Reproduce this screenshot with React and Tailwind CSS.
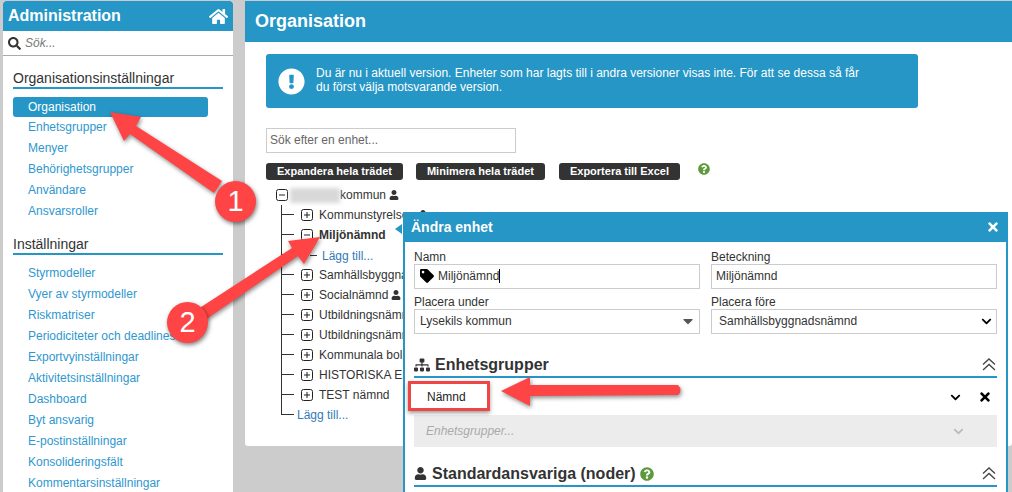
import React from 'react';
import {
  FaHome,
  FaSearch,
  FaUser,
  FaTag,
  FaSitemap,
  FaQuestionCircle,
  FaTimes,
  FaChevronDown,
  FaExclamationCircle,
  FaCaretDown,
} from 'react-icons/fa';

const menuA = ['Enhetsgrupper', 'Menyer', 'Behörighetsgrupper', 'Användare', 'Ansvarsroller'];
const menuB = [
  'Styrmodeller',
  'Vyer av styrmodeller',
  'Riskmatriser',
  'Periodiciteter och deadlines',
  'Exportvyinställningar',
  'Aktivitetsinställningar',
  'Dashboard',
  'Byt ansvarig',
  'E-postinställningar',
  'Konsolideringsfält',
  'Kommentarsinställningar',
];

const MenuLink = ({ label }) => (
  <div className="h-[21px] pl-[15px] text-[12px] leading-[21px] text-[#2f97cf] whitespace-nowrap">{label}</div>
);

const Heading = ({ label }) => (
  <div className="mx-[10px] border-b-2 border-[#2596c6] h-[19px] text-[14px] leading-[17px] text-[#333] whitespace-nowrap">
    {label}
  </div>
);

const Sidebar = () => (
  <div className="w-[230px] h-[491px] shrink-0 bg-white rounded-t-[3px] overflow-hidden">
    <div className="h-[30px] bg-[#2596c6] flex items-center justify-between pl-[5px] pr-[5px] rounded-t-[3px]">
      <span className="text-[16px] font-bold text-white">Administration</span>
      <FaHome className="text-white text-[19px]" />
    </div>
    <div className="h-[25px] flex items-center pl-[5px] border-b border-[#aaa]">
      <FaSearch className="text-[#333] text-[13px]" />
      <span className="ml-[4px] text-[12px] italic text-[#777]">Sök...</span>
    </div>
    <div className="pt-[14px]">
      <Heading label="Organisationsinställningar" />
      <div className="mt-[8px] mx-[10px] w-[195px] h-[20px] bg-[#2596c6] rounded-[3px] pl-[15px] text-[12px] leading-[20px] text-white">
        Organisation
      </div>
      <div className="ml-[10px]">
        {menuA.map((m) => (
          <MenuLink key={m} label={m} />
        ))}
      </div>
      <div className="mt-[14px]">
        <Heading label="Inställningar" />
      </div>
      <div className="mt-[8px] ml-[10px]">
        {menuB.map((m) => (
          <MenuLink key={m} label={m} />
        ))}
      </div>
    </div>
  </div>
);

const TreeBox = ({ open }) => (
  <svg width="12" height="12" viewBox="0 0 12 12" className="shrink-0">
    <rect x="0.5" y="0.5" width="11" height="11" rx="2" fill="white" stroke="#222" />
    <path d="M3 6H9" stroke="#222" />
    {!open && <path d="M6 3V9" stroke="#222" />}
  </svg>
);

const Stub = ({ last }) => (
  <div className={`w-[13px] h-5 shrink-0 ${last ? '' : 'border-l border-[#333]'}`}>
    <div className={`h-[10px] border-b border-[#333] ${last ? 'border-l' : ''}`} />
  </div>
);

// labels stop where the dialog starts, except the first row that peeks out above it
const TreeRow = ({ label, bold, open, user, clip }) => (
  <div className="flex items-center h-5">
    <Stub />
    <div className="ml-[7px]">
      <TreeBox open={open} />
    </div>
    <span className={`ml-[6px] text-[12px] whitespace-nowrap text-[#333] ${bold ? 'font-bold' : ''} ${clip ? 'max-w-[84px] overflow-hidden' : ''}`}>
      {label}
    </span>
    {user && <FaUser className="ml-[3px] text-[10px] text-[#333]" />}
  </div>
);

const Tree = () => (
  <div className="mt-[5px] ml-[10px] text-[12px]">
    <div className="flex items-center h-5">
      <TreeBox open />
      <div className="ml-[2px] w-[50px] h-[15px] bg-[#d8d8d8] blur-[2px]" />
      <span className="text-[#333]">kommun</span>
      <FaUser className="ml-[3px] text-[10px] text-[#333]" />
    </div>
    <div className="ml-[5px]">
      <TreeRow label="Kommunstyrelsen" user />
      <TreeRow label="Miljönämnd" bold open />
      <div className="flex items-center h-5">
        <Stub />
        <div className="ml-[16px] h-5 flex items-center">
          <div className="w-[7px] border-b border-[#333]" />
          <span className="ml-[5px] pt-[1px] text-[#337ab7]">Lägg till...</span>
        </div>
      </div>
      <TreeRow label="Samhällsbyggnadsnämnd" clip />
      <TreeRow label="Socialnämnd" user />
      <TreeRow label="Utbildningsnämnd" clip />
      <TreeRow label="Utbildningsnämnd" clip />
      <TreeRow label="Kommunala bolag" clip />
      <TreeRow label="HISTORISKA ENHETER" clip />
      <TreeRow label="TEST nämnd" />
      <div className="flex items-center h-5">
        <Stub last />
        <span className="ml-[3px] text-[#337ab7]">Lägg till...</span>
      </div>
    </div>
  </div>
);

const DarkButton = ({ label, className }) => (
  <div className={`h-[17px] w-fit bg-[#333] rounded-[3px] px-[11px] text-[11px] leading-[17px] font-bold text-white whitespace-nowrap ${className}`}>
    {label}
  </div>
);

const Main = () => (
  <div className="relative flex-1 h-[445px] bg-white rounded-b-[3px] overflow-hidden">
    <div className="h-[41px] bg-[#2596c6] pl-[10px] text-[18px] leading-[41px] font-bold text-white">Organisation</div>
    <div className="pl-[21px]">
      <div className="mt-[12px] w-[652px] h-[54px] bg-[#2596c6] rounded-[3px] flex items-center pl-[12px]">
        <FaExclamationCircle className="text-white text-[27px] shrink-0" />
        <p className="ml-[11px] mb-[3px] w-[550px] text-[12px] leading-[14px] text-white">
          Du är nu i aktuell version. Enheter som har lagts till i andra versioner visas inte. För att se dessa så får du först välja motsvarande version.
        </p>
      </div>
      <div className="mt-[20px] w-[250px] h-[25px] border border-[#ccc] pl-[3px] text-[12px] leading-[23px] text-[#666]">
        Sök efter en enhet...
      </div>
      <div className="mt-[10px] flex items-start">
        <DarkButton label="Expandera hela trädet" />
        <DarkButton label="Minimera hela trädet" className="ml-[13px]" />
        <DarkButton label="Exportera till Excel" className="ml-[14px]" />
        <FaQuestionCircle className="ml-[18px] text-[12px] text-[#5c9a3c]" />
      </div>
      <Tree />
    </div>
  </div>
);

const Field = ({ label, children }) => (
  <div>
    <div className="h-[13px] text-[12px] leading-[13px] text-[#333]">{label}</div>
    <div className="h-[25px] border border-[#ccc] pb-[1px] flex items-center text-[12px] text-[#333] bg-white">{children}</div>
  </div>
);

const CollapseIcon = () => (
  <svg width="14" height="13" viewBox="0 0 14 13" className="shrink-0" fill="none" stroke="#444" strokeWidth="1.3">
    <path d="M1 6.5L7 1L13 6.5" />
    <path d="M1 12L7 6.5L13 12" />
  </svg>
);

const SectionTitle = ({ icon, label, help }) => (
  <div className="flex items-center justify-between h-[24px] border-b-2 border-[#2596c6] pr-[1px] pb-[1px]">
    <div className="flex items-center text-[16px] font-bold text-[#333]">
      {icon}
      <span className="ml-[5px] whitespace-nowrap">{label}</span>
      {help && <FaQuestionCircle className="ml-[4px] text-[14px] text-[#5c9a3c]" />}
    </div>
    <CollapseIcon />
  </div>
);

const Modal = () => (
  <div className="absolute left-[403px] top-[212px] w-[605px] h-[280px] bg-white border-x-2 border-t-2 border-[#2596c6] overflow-hidden">
    <div className="h-[28px] bg-[#2596c6] flex items-center justify-between pl-[6px] pr-[6px] pb-[2px]">
      <span className="text-[14px] font-bold text-white">Ändra enhet</span>
      <FaTimes className="text-white text-[14px]" />
    </div>
    <div className="pl-[9px] pr-[9px] pt-[9px]">
      <div className="grid grid-cols-[286px_286px] gap-x-[11px] gap-y-[7px]">
        <Field label="Namn">
          <FaTag className="ml-[5px] text-[14px] text-black" />
          <span className="ml-[4px]">Miljönämnd</span>
          <span className="w-px h-[14px] bg-black" />
        </Field>
        <Field label="Beteckning">
          <span className="ml-[4px]">Miljönämnd</span>
        </Field>
        <Field label="Placera under">
          <span className="ml-[5px] flex-1">Lysekils kommun</span>
          <FaCaretDown className="mr-[3px] text-[16px] text-[#555]" />
        </Field>
        <Field label="Placera före">
          <span className="ml-[7px] flex-1">Samhällsbyggnadsnämnd</span>
          <FaChevronDown className="mr-[4px] text-[11px] text-black" />
        </Field>
      </div>
      <div className="mt-[20px]">
        <SectionTitle icon={<FaSitemap className="text-[16px] text-[#333]" />} label="Enhetsgrupper" />
      </div>
      <div className="h-[37px] pt-[1px] flex items-center pl-[13px] text-[12px] text-[#222]">
        <span className="flex-1">Nämnd</span>
        <FaChevronDown className="mr-[17px] text-[11px] text-black" />
        <FaTimes className="mr-[5px] text-[14px] text-black" />
      </div>
      <div className="h-[32px] bg-[#ececec] flex items-center pl-[12px] text-[12px] italic text-[#aaa]">
        <span className="flex-1">Enhetsgrupper...</span>
        <FaChevronDown className="mr-[33px] text-[11px] text-[#bbb]" />
      </div>
      <div className="mt-[16px]">
        <SectionTitle icon={<FaUser className="text-[13px] text-[#333]" />} label="Standardansvariga (noder)" help />
      </div>
    </div>
  </div>
);

const Arrows = () => (
  <svg width="1012" height="492" className="absolute left-0 top-0 pointer-events-none drop-shadow-[1px_2px_2px_rgba(0,0,0,0.45)]">
    <path d="M110 112 L141 117 L136 126 L222 181 L214 193 L130 134 L124 141 Z" fill="#fe4444" />
    <path d="M320 237 L304 264 L298 256 L205 320 L198 309 L292 248 L288 241 Z" fill="#fe4444" />
    <path d="M501 391 L530 377 L530 385 L678 385 Q683 390 678 395 L530 396 L530 406 Z" fill="#fe4444" />
  </svg>
);

const Badge = ({ n, className }) => (
  <div className={`absolute w-[41px] h-[41px] rounded-full bg-[#fe4444] shadow-[1px_2px_4px_rgba(0,0,0,0.5)] text-white text-[29px] leading-[41px] text-center ${className}`}>
    {n}
  </div>
);

export default function App() {
  return (
    <div className="relative w-[1012px] h-[492px] overflow-hidden bg-[#cccccc] font-['Liberation_Sans',Arial,sans-serif]">
      <div className="flex pt-[1px] pl-[3px]">
        <Sidebar />
        <div className="w-[12px] shrink-0" />
        <Main />
      </div>
      <Modal />
      <div className="absolute left-[395px] top-[224px] w-0 h-0 border-y-[5px] border-y-transparent border-r-[7px] border-r-[#2596c6]" />
      <div className="absolute left-[408px] top-[381px] w-[82px] h-[30px] border-[3px] border-[#f04545] shadow-[0_2px_4px_rgba(0,0,0,0.4)]" />
      <Arrows />
      <Badge n="1" className="left-[215px] top-[181px]" />
      <Badge n="2" className="left-[167px] top-[302px]" />
    </div>
  );
}
